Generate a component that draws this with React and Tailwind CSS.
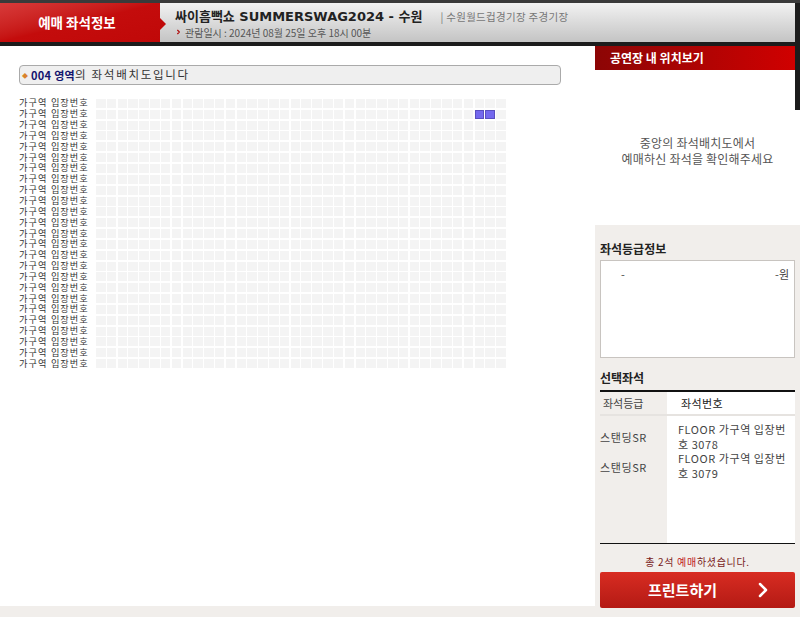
import { ChevronRight } from 'lucide-react'

const FONT = "font-['Noto_Sans_CJK_KR','Noto_Sans',sans-serif]"
const rows = Array.from({ length: 25 }, (_, i) => i)
const cols = Array.from({ length: 38 }, (_, i) => i)

function Seat({ picked }) {
  return <div className={`h-[9px] w-[9.5px] ${picked ? 'border border-[#5a4fc0] bg-[#7468ee]' : 'bg-[#f4f4f4]'}`} />
}

function SeatMap() {
  return (
    <div className="mt-[13px] ml-[19px] flex flex-col">
      {rows.map((r) => (
        <div key={r} className="flex h-[10.85px] items-center">
          <div className="w-[77px] shrink-0 font-['Liberation_Sans','Noto_Sans_CJK_KR',sans-serif] text-[9.2px] leading-[10px] tracking-[1px] whitespace-nowrap text-[#333]">
            가구역 입장번호
          </div>
          <div className="grid w-[411px] grid-cols-[repeat(38,1fr)]">
            {cols.map((c) => (
              <Seat key={c} picked={r === 1 && (c === 35 || c === 36)} />
            ))}
          </div>
        </div>
      ))}
    </div>
  )
}

export default function App() {
  return (
    <div className={`${FONT} flex h-[617px] w-[800px] flex-col overflow-hidden bg-[#f1eeeb]`}>
      <header className="flex h-[46px] shrink-0 flex-col bg-[#1c1c1c]">
        <div className="h-[3px] bg-[#3a3a3a]" />
        <div className="flex h-[39px] pr-[5px]">
          <div className="relative flex w-[160px] items-center justify-center bg-gradient-to-br from-[#d83a3a] via-[#c40c0c] to-[#c00808] pr-[6px] text-[13.5px] font-bold text-white">
            예매 좌석정보
            <span className="absolute top-[15px] right-[-6px] h-0 w-0 border-y-[6px] border-l-[6px] border-y-transparent border-l-[#c00808]" />
          </div>
          <div className="flex flex-1 flex-col justify-center bg-gradient-to-b from-[#f2f2f2] to-[#c4c4c4] pl-[15px]">
            <div className="flex items-baseline whitespace-nowrap">
              <span className="font-['DejaVu_Sans','Noto_Sans_CJK_KR',sans-serif] text-[13px] leading-[19px] font-bold text-[#222]">
                싸이흠뻑쇼 SUMMERSWAG2024 - 수원
              </span>
              <span className="ml-[18px] text-[10.5px] tracking-[0.3px] text-[#777]">| 수원월드컵경기장 주경기장</span>
            </div>
            <div className="flex items-center text-[10px] leading-[13px] text-[#555]">
              <ChevronRight className="mr-[3px] h-[10px] w-[7px] text-[#b01010]" strokeWidth={4} />
              관람일시 : 2024년 08월 25일 오후 18시 00분
            </div>
          </div>
        </div>
      </header>

      <div className="flex h-[560px] shrink-0">
        <main className="w-[595px] bg-white pt-[19px]">
          <div className="ml-[19px] flex h-[20px] w-[542px] items-center rounded-[4px] border border-[#aaa] bg-[#efefef] pl-[2px] text-[11px]">
            <span className="mr-[3px] text-[6px] text-[#d9822b]">◆</span>
            <span className="font-bold tracking-[0.3px] text-[#14146e]">004 영역</span>
            <span className="text-[11.5px] tracking-[1.7px] text-[#333]">의 좌석배치도입니다</span>
          </div>
          <SeatMap />
        </main>

        <aside className="flex w-[205px] flex-col">
          <div className="flex h-[179px] shrink-0 bg-white">
            <div className="flex w-[200px] flex-col">
              <div className="flex h-[24px] items-center bg-gradient-to-r from-[#8c0505] to-[#d00000] pl-[15px] text-[12px] font-bold text-white">
                공연장 내 위치보기
              </div>
              <div className="flex flex-1 flex-col items-center pt-[65px] pl-[5px] text-[12px] leading-[16px] tracking-[0.2px] text-[#555]">
                <p>중앙의 좌석배치도에서</p>
                <p>예매하신 좌석을 확인해주세요</p>
              </div>
            </div>
            <div className="h-[64px] w-[5px] bg-[#1c1c1c]" />
          </div>

          <div className="flex shrink-0 flex-col bg-[#f1eeeb] pt-[16px] pr-[5px] pl-[5px]">
            <h3 className="text-[12px] leading-[16px] font-bold text-[#222]">좌석등급정보</h3>
            <div className="mt-[3px] flex h-[98px] justify-between border border-[#c8c4c0] bg-white pt-[5px] pr-[5px] pl-[20px] text-[11px] text-[#444]">
              <span>-</span>
              <span>-원</span>
            </div>

            <h3 className="mt-[12px] text-[12px] leading-[16px] font-bold text-[#222]">선택좌석</h3>
            <div className="mt-[4px] flex h-[154px] flex-col border-t-2 border-b border-[#111] bg-white text-[11px] text-[#444]">
              <div className="flex h-[24px] shrink-0 items-center border-b-2 border-[#e6e3e0]">
                <span className="flex h-full w-[67px] items-center bg-[#f1eeeb] pl-[3px]">좌석등급</span>
                <span className="pl-[14px] tracking-[0.4px] text-[#222]">좌석번호</span>
              </div>
              <div className="flex flex-1">
                <div className="flex w-[67px] flex-col gap-[15px] bg-[#f1eeeb] pt-[14px] tracking-[0.6px] text-[#444]">
                  <span className="leading-[15px]">스탠딩SR</span>
                  <span className="leading-[15px]">스탠딩SR</span>
                </div>
                <div className="flex-1 pt-[6px] pr-[4px] pl-[11px] leading-[14.5px] tracking-[0.55px] break-all">
                  <p>FLOOR 가구역 입장번호 3078</p>
                  <p>FLOOR 가구역 입장번호 3079</p>
                </div>
              </div>
            </div>

            <p className="mt-[11px] text-center text-[10px] leading-[13px] tracking-[0.7px] text-[#7a2222]">
              총 2석 <span className="text-[#c02020]">예매</span>하셨습니다.
            </p>
            <button
              type="button"
              className="mt-[4px] flex h-[36px] items-center rounded-[2px] bg-gradient-to-b from-[#d82c22] to-[#b41a14] text-[15px] font-bold text-white"
            >
              <span className="w-[150px] pl-[15px] text-center">프린트하기</span>
              <ChevronRight className="ml-[1px] h-[24px] w-[24px]" strokeWidth={2.5} />
            </button>
          </div>
        </aside>
      </div>
    </div>
  )
}
